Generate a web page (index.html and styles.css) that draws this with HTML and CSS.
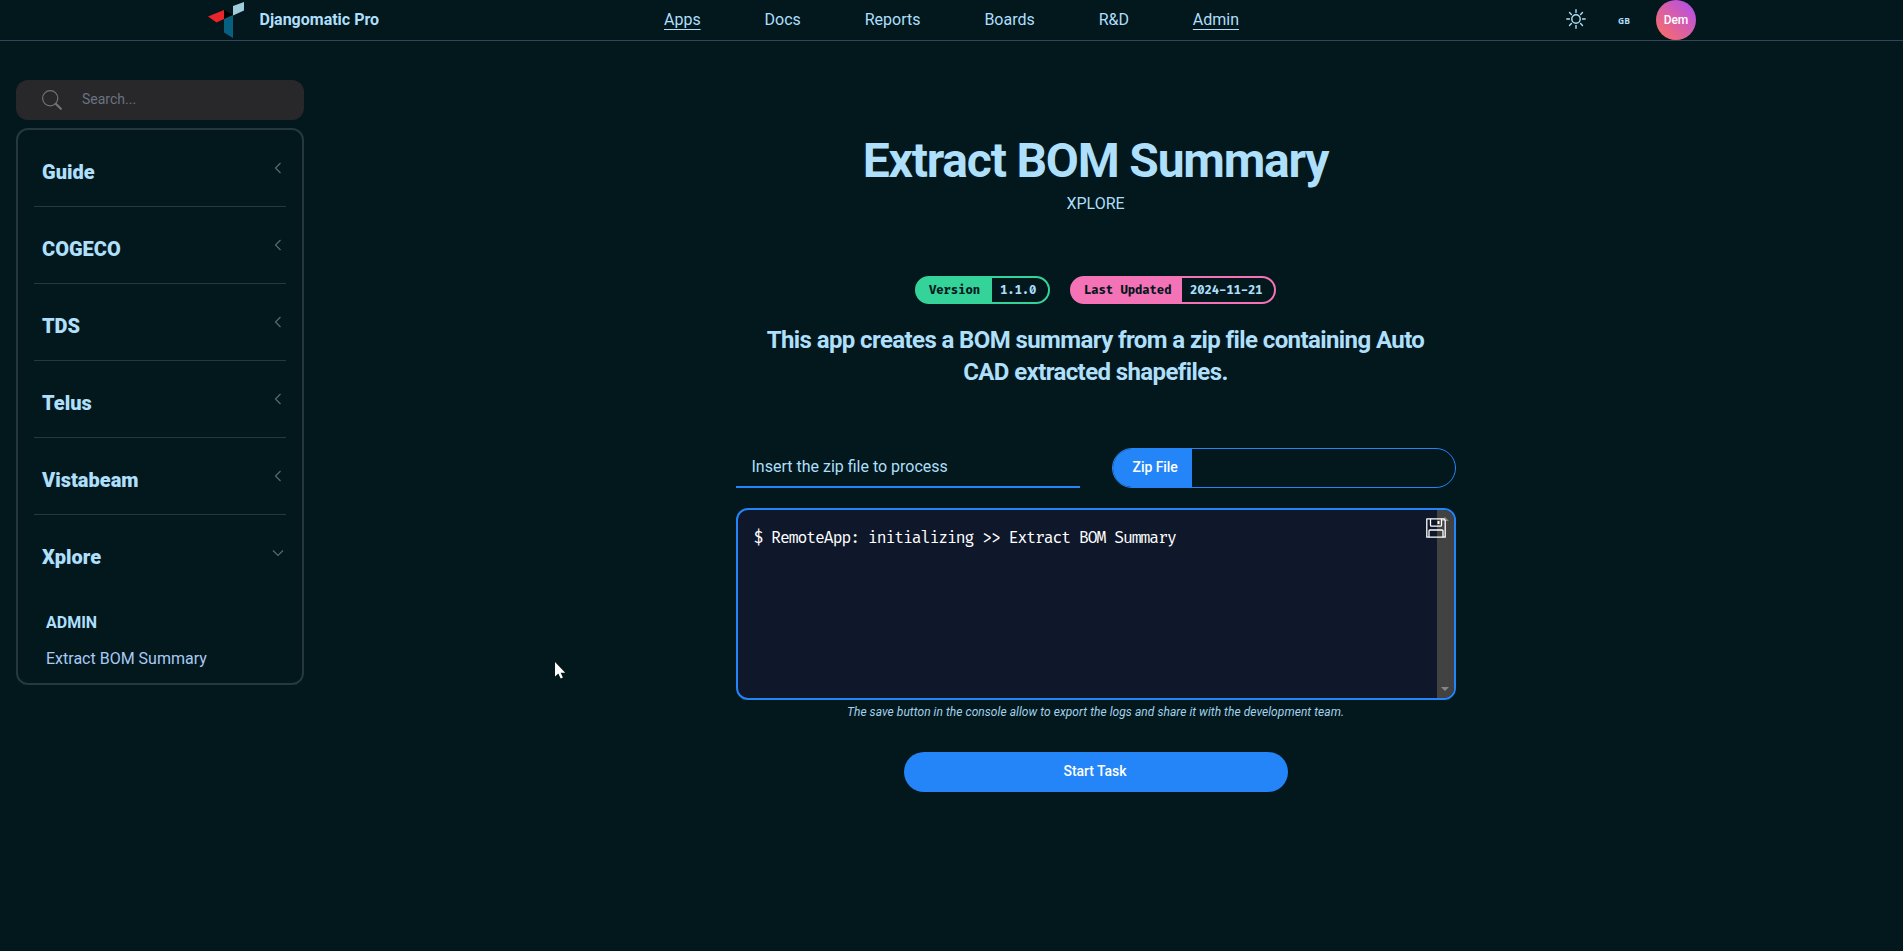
FILE: index.html
```html
<!DOCTYPE html>
<html lang="en">
<head>
<meta charset="utf-8">
<title>Extract BOM Summary</title>
<link rel="stylesheet" href="styles.css">
</head>
<body>
<header class="topbar">
  <a class="brand">
    <svg class="logo" width="38" height="38" viewBox="0 0 38 38"><path fill="#000" d="M17 10l9 5-9 4z"/><path fill="#e8252b" d="M1 16.5L17 10v9l-7.500 3.500z"/><path fill="#9fcddc" d="M26 6l11-4v8.500l-11 5z"/><path fill="#086080" d="M17 19l9-4v23l-9-5.500z"/></svg>
    <span class="brand-name">Djangomatic Pro</span>
  </a>
  <nav class="nav"><a class="underlined">Apps</a><a>Docs</a><a>Reports</a><a>Boards</a><a>R&amp;D</a><a class="underlined">Admin</a></nav>
  <div class="tools">
    <svg class="sun" width="20" height="20" viewBox="0 0 20 20" fill="none" stroke="#aedffb" stroke-width="1.400" stroke-linecap="round"><circle cx="10" cy="10" r="4.200"/><path d="M10 .8v2.700M10 16.500v2.700M.8 10h2.700M16.500 10h2.700M3.500 3.500l1.900 1.900M14.600 14.600l1.900 1.900M3.500 16.500l1.900-1.900M14.600 5.400l1.900-1.900"/></svg>
    <span class="locale">GB</span>
    <span class="avatar">Dem</span>
  </div>
</header>
<div class="layout">
  <aside class="sidebar">
    <div class="search">
      <svg width="20" height="20" viewBox="0 0 20 20" fill="none" stroke="#71717a"><circle cx="8.200" cy="8.200" r="7.600" stroke-width="1.200"/><path d="M13.800 13.800l5 5" stroke-width="2.200" stroke-linecap="round"/></svg>
      <span>Search...</span>
    </div>
    <div class="menu">
      <div class="item"><span>Guide</span><svg class="chev" viewBox="0 0 12 12"><path d="M8.500 1l-5 5 5 5"/></svg></div>
      <div class="item"><span>COGECO</span><svg class="chev" viewBox="0 0 12 12"><path d="M8.500 1l-5 5 5 5"/></svg></div>
      <div class="item"><span>TDS</span><svg class="chev" viewBox="0 0 12 12"><path d="M8.500 1l-5 5 5 5"/></svg></div>
      <div class="item"><span>Telus</span><svg class="chev" viewBox="0 0 12 12"><path d="M8.500 1l-5 5 5 5"/></svg></div>
      <div class="item"><span>Vistabeam</span><svg class="chev" viewBox="0 0 12 12"><path d="M8.500 1l-5 5 5 5"/></svg></div>
      <div class="item open"><span>Xplore</span><svg class="chev" viewBox="0 0 12 12"><path d="M1 3.500l5 5 5-5"/></svg></div>
      <div class="group">Admin</div>
      <a class="leaf">Extract BOM Summary</a>
    </div>
  </aside>
  <main class="main">
    <h1>Extract BOM Summary</h1>
    <div class="client">XPLORE</div>
    <div class="badges">
      <div class="badge green"><span class="key">Version</span><span class="val">1.1.0</span></div>
      <div class="badge pink"><span class="key">Last Updated</span><span class="val">2024-11-21</span></div>
    </div>
    <h2>This app creates a BOM summary from a zip file containing Auto CAD extracted shapefiles.</h2>
    <div class="form">
      <div class="label">Insert the zip file to process</div>
      <div class="file"><span class="file-btn">Zip File</span></div>
    </div>
    <div class="console">
      <div class="log">$ RemoteApp: initializing &gt;&gt; Extract BOM Summary</div>
      <div class="scrollbar"><i class="up"></i><i class="down"></i></div>
      <svg class="save" width="20" height="20" viewBox="0 0 20 20" fill="none" stroke="#fff" stroke-width="1.300"><path d="M.8 .8h16.800l1.600 1.600v16.800H.8z" stroke-linejoin="round"/><path d="M4.500 .8v6.400q0 1 1 1h9q1 0 1-1v-6.400M3 19v-6q0-1 1-1h12q1 0 1 1v6"/><path d="M12.500 3v3" stroke-width="2"/></svg>
    </div>
    <div class="note">The save button in the console allow to export the logs and share it with the development team.</div>
    <button class="start">Start Task</button>
  </main>
</div>
<svg class="cursor" width="12" height="18" viewBox="0 0 12 18"><path fill="#fff" d="M0 0v14.500l3.300-3 2.400 5 2.200-1-2.300-4.800h4.600z"/></svg>
</body>
</html>
```
FILE: styles.css
```css
* { box-sizing: border-box; }
body { margin: 0; height: 951px; overflow: hidden; background: #02181c; color: #aedffb; font-family: Roboto, sans-serif; font-size: 16px; line-height: 24px; }
.topbar { display: grid; grid-template-columns: 457px 1fr 130px; height: 41px; padding: 0 207px; border-bottom: 1px solid #334557; }
.brand { display: flex; }
.brand-name { margin: 8px 0 0 14.500px; font-weight: 700; }
.nav { display: flex; gap: 63.900px; padding-top: 8px; }
.underlined { text-decoration: underline; text-underline-offset: 4px; text-decoration-thickness: 1px; }
.tools { display: flex; align-items: center; }
.sun { margin-bottom: 2px; }
.locale { width: 12px; margin: 2px 26px 0 32px; font: 700 8.500px/12px "Open Sans", sans-serif; }
.avatar { width: 40px; height: 40px; border-radius: 50%; background: linear-gradient(45deg, #ff705b, #b04cf5); color: #fff; font-size: 12px; line-height: 40px; font-weight: 500; letter-spacing: -.1px; text-align: center; }
.layout { display: grid; grid-template-columns: 288px 1fr; padding: 39px 16px 0 16px; }
.search { display: flex; align-items: center; gap: 20px; height: 40px; padding-left: 26px; border-radius: 12px; background: #28282b; color: #6b7280; font-size: 14px; }
.search span { margin-bottom: 2px; }
.menu { height: 557px; margin-top: 8px; padding: 0 16px; border: 2px solid #27383d; border-radius: 12px; }
.item { display: flex; justify-content: space-between; height: 77px; padding: 28px 2px 0 8px; border-bottom: 1px solid #27383d; font-size: 20px; line-height: 28px; font-weight: 900; }
.item.open { border-bottom-color: transparent; }
.chev { width: 12px; height: 12px; margin-top: 4px; fill: none; stroke: #5d686d; stroke-width: 1.200; }
.group { margin: 19px 0 0 12px; line-height: 24px; font-weight: 700; text-transform: uppercase; }
.leaf { display: block; margin: 12px 0 0 12px; color: #a9c9f5; }
.main { display: flex; flex-direction: column; align-items: center; padding-top: 57px; }
h1 { margin: 0; font-size: 48px; line-height: 48px; font-weight: 700; letter-spacing: -1.2px; }
.client { margin-top: 7px; line-height: 24px; }
.badges { display: flex; gap: 20px; margin-top: 60px; }
.badge { display: flex; height: 28px; border: 2px solid; border-radius: 14px; overflow: hidden; white-space: nowrap; font: 700 12px/25px "Fira Code", "DejaVu Sans Mono", monospace; }
.green { width: 135px; border-color: #34d399; background: linear-gradient(90deg, #34d399 50%, transparent 50%); }
.pink { width: 206px; border-color: #f472b6; background: linear-gradient(90deg, #f472b6 50%, transparent 50%); }
.key { flex: none; padding-left: 12px; color: #02181c; letter-spacing: -.1px; }
.green .key { width: 75px; background: #34d399; }
.pink .key { width: 110px; background: #f472b6; }
.val { padding-left: 8px; letter-spacing: -.15px; }
h2 { width: 720px; margin: 20px 0 0; padding: 0 24px; font-size: 24px; line-height: 32px; font-weight: 700; letter-spacing: -.6px; text-align: center; }
.form { display: grid; grid-template-columns: 344px 344px; gap: 32px; width: 720px; margin-top: 60px; }
.label { height: 40px; padding: 7px 15px 7px 16px; border-bottom: 2px solid #2385f7; }
.file { height: 40px; border: 1px solid #2385f7; border-radius: 20px; overflow: hidden; }
.file-btn { display: block; width: 79px; height: 38px; padding-left: 20px; background: #2385f7; color: #fff; font-size: 14px; line-height: 37px; font-weight: 500; letter-spacing: -.05px; }
.console { position: relative; display: flex; justify-content: space-between; width: 720px; height: 192px; margin-top: 20px; border: 2px solid #2385f7; border-radius: 12px; overflow: hidden; background: #0f172a; color: #fff; }
.log { padding: 16px; font: 16px/25px "Fira Code", "DejaVu Sans Mono", monospace; letter-spacing: -1.05px; }
.scrollbar { display: flex; flex-direction: column; justify-content: space-between; align-items: center; width: 17px; padding: 7px 0; background: #424242; }
.up, .down { border: 4px solid transparent; border-top: 0; border-bottom-color: #858585; }
.down { transform: rotate(180deg); }
.save { position: absolute; top: 8px; right: 8px; }
.note { margin-top: 2px; font-size: 12px; line-height: 20px; font-style: italic; letter-spacing: .05px; color: #a4d2ec; }
.start { width: 384px; height: 40px; margin-top: 30px; padding: 0 1px 2px 0; border: 0; border-radius: 20px; background: #2385f7; color: #fff; font: 500 14px Roboto, sans-serif; letter-spacing: -.05px; }
.cursor { position: absolute; left: 555px; top: 662px; }
```
